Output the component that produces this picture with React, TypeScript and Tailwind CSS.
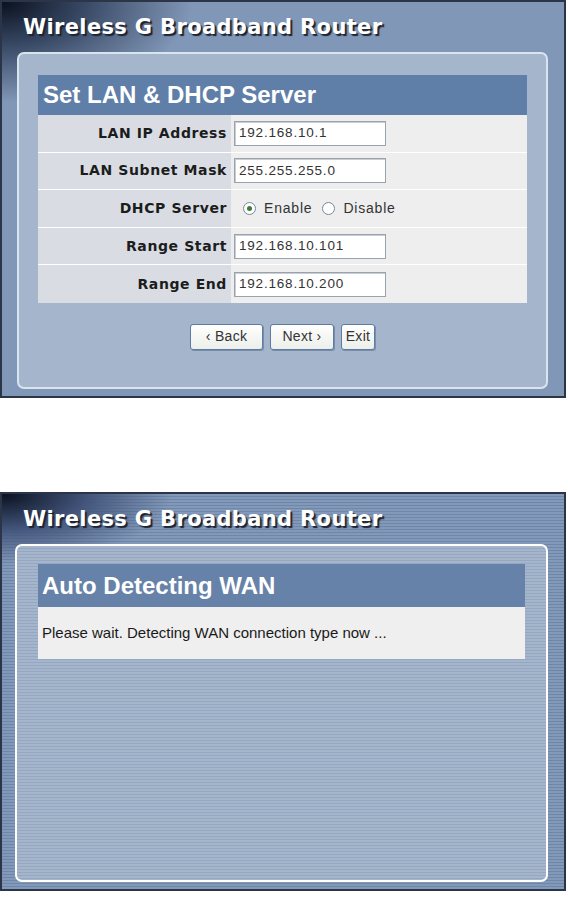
const ROWS = [
  { label: "LAN IP Address", value: "192.168.10.1" },
  { label: "LAN Subnet Mask", value: "255.255.255.0" },
  { label: "DHCP Server", radio: true },
  { label: "Range Start", value: "192.168.10.101" },
  { label: "Range End", value: "192.168.10.200" },
];

function RouterTitle() {
  return (
    <h1 className="pl-[21px] font-['DejaVu_Sans',sans-serif] text-[21px] font-bold leading-none tracking-[0.35px] text-white [text-shadow:2px_2px_1px_#1c2433]">
      Wireless G Broadband Router
    </h1>
  );
}

function Radio({ checked }: { checked?: boolean }) {
  return (
    <span className="flex h-[13px] w-[13px] items-center justify-center rounded-full border border-[#7b8796] bg-white">
      {checked && <span className="h-[5px] w-[5px] rounded-full bg-[#3d7a3d]" />}
    </span>
  );
}

function Button({ children, w }: { children: string; w: string }) {
  return (
    <button
      className={`${w} h-[26px] rounded-[3px] border border-[#5d7ba6] bg-gradient-to-b from-white to-[#ecefe9] font-['Liberation_Sans',sans-serif] text-[14px] tracking-[0.3px] text-[#333] shadow-[1px_1px_0_#7a8da8]`}
    >
      {children}
    </button>
  );
}

export default function App() {
  return (
    <div className="min-h-[897px] w-[568px] bg-white font-['Liberation_Sans',sans-serif]">
      {/* Ekran 1 — LAN & DHCP */}
      <section className="flex h-[398px] w-[566px] flex-col border-2 border-[#2b3547] bg-[#8197b7] bg-[radial-gradient(ellipse_190px_100px_at_0_0,#0a111f_0%,#3a4b67_45%,transparent_100%)]">
        <div className="flex h-[50px] items-center">
          <RouterTitle />
        </div>
        <div className="mb-[7px] ml-[15px] mr-[16px] flex flex-1 flex-col rounded-[7px] border-2 border-[#d8e4ee] bg-[#a5b5cb] px-[19px] pt-[21px]">
          <div className="flex h-[40px] items-center bg-[#5f7fa8] pl-[5px] text-[24px] font-bold text-white">
            Set LAN &amp; DHCP Server
          </div>
          <div className="flex flex-col bg-[#eeeeee]">
            {ROWS.map((row) => (
              <div key={row.label} className="flex h-[37.6px] border-b border-white last:border-b-0">
                <div className="flex w-[193px] items-center justify-end bg-[#d9dde3] pr-[4px] font-['DejaVu_Sans',sans-serif] text-[14px] font-bold tracking-[0.6px] text-[#1c1c1c]">
                  {row.label}
                </div>
                <div className="flex flex-1 items-center pl-[3px]">
                  {row.radio ? (
                    <div className="flex items-center pl-[9px] text-[14px] tracking-[0.8px] text-[#333]">
                      <Radio checked />
                      <span className="ml-[8px] mr-[10px]">Enable</span>
                      <Radio />
                      <span className="ml-[8px]">Disable</span>
                    </div>
                  ) : (
                    <div className="flex h-[25px] w-[152px] items-center border border-[#9aa3ad] bg-white pl-[4px] text-[13.5px] tracking-[0.8px] text-[#333] shadow-[inset_1px_1px_0_#c9ced4]">
                      {row.value}
                    </div>
                  )}
                </div>
              </div>
            ))}
          </div>
          <div className="flex justify-center gap-[7px] pt-[21px]">
            <Button w="w-[73px]">‹ Back</Button>
            <Button w="w-[64px]">Next ›</Button>
            <Button w="w-[34px]">Exit</Button>
          </div>
        </div>
      </section>

      <div className="h-[94px]" />

      {/* Ekran 2 — Auto Detecting WAN */}
      <section className="flex h-[399px] w-[566px] flex-col border-2 border-[#2b3547] bg-[#7e95b6] bg-[radial-gradient(ellipse_170px_70px_at_0_0,#0a111f_0%,#42547a_50%,transparent_100%),repeating-linear-gradient(to_bottom,#8299b9_0px,#8299b9_2px,#6e86a8_2px,#6e86a8_3px)]">
        <div className="flex h-[50px] items-center">
          <RouterTitle />
        </div>
        <div className="mb-[7px] ml-[13px] mr-[16px] flex flex-1 flex-col rounded-[7px] border-2 border-white bg-[#a3b3ca] bg-[repeating-linear-gradient(to_bottom,#a5b5cc_0px,#a5b5cc_2px,#95a7c1_2px,#95a7c1_3px)] px-[21px] pt-[18px]">
          <div className="flex h-[43px] items-center bg-[#6682a8] pl-[4px] text-[24px] font-bold text-white">
            Auto Detecting WAN
          </div>
          <div className="flex h-[52px] items-center bg-[#efefef] pl-[4px] text-[15px] text-[#1a1a1a]">
            Please wait. Detecting WAN connection type now ...
          </div>
        </div>
      </section>
    </div>
  );
}
